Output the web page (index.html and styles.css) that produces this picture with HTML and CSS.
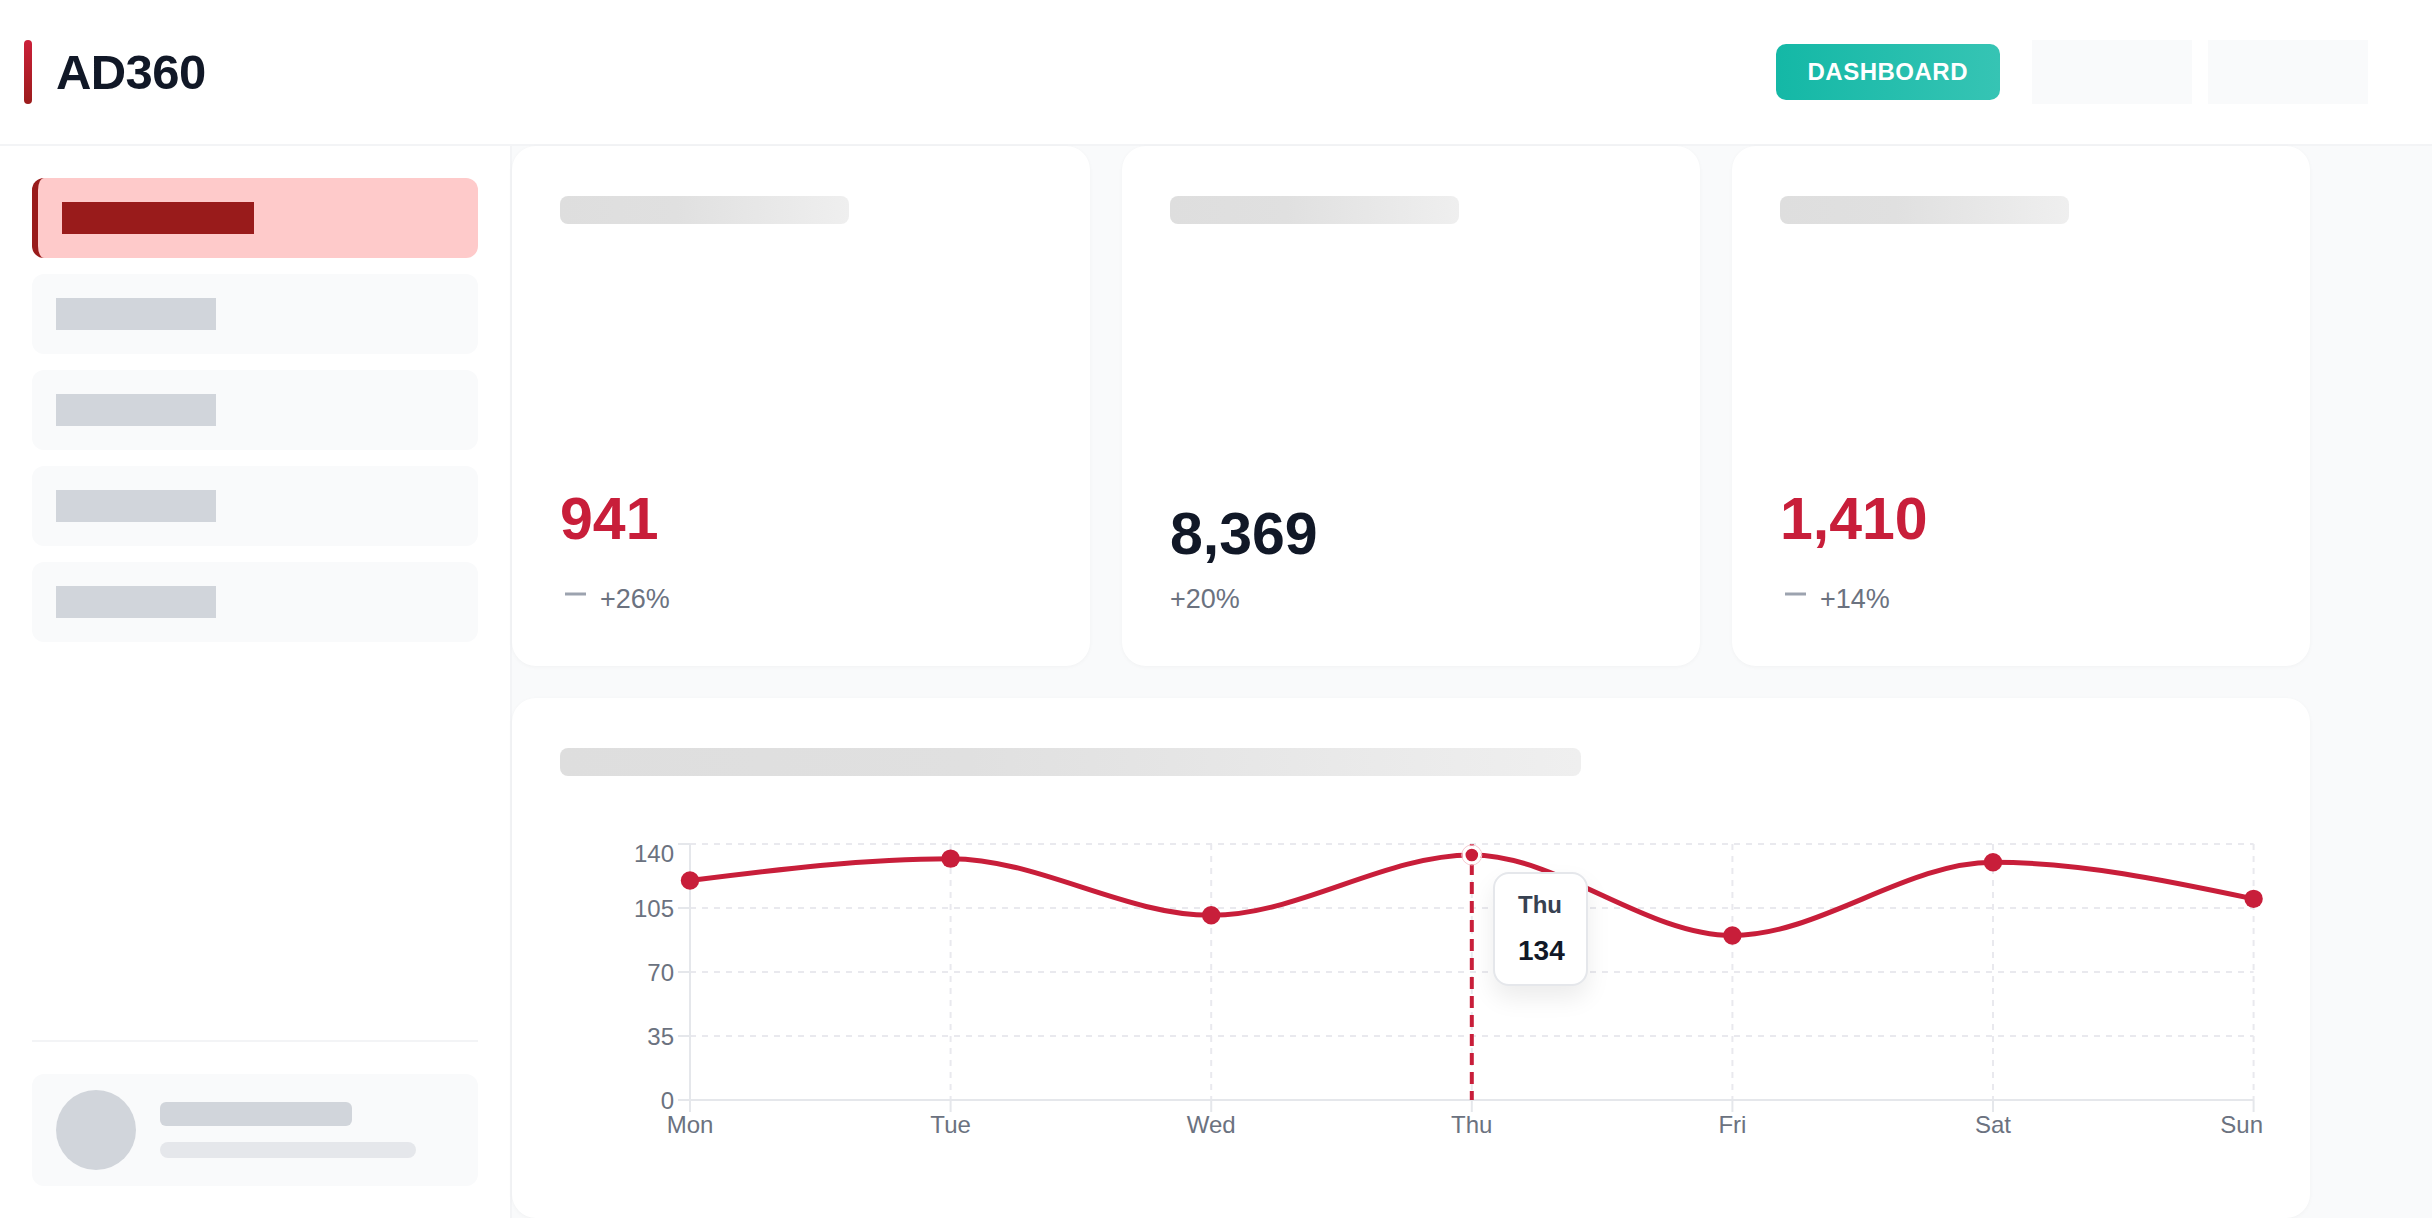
FILE: index.html
```html
<!DOCTYPE html>
<html lang="en">
<head>
<meta charset="utf-8">
<title>AD360</title>
<link rel="stylesheet" href="styles.css">
</head>
<body>
<div class="app">
  <header class="topbar">
    <div class="brand">
      <span class="brand-bar"></span>
      <span class="brand-name">AD360</span>
    </div>
    <div class="top-actions">
      <button class="btn-dash">DASHBOARD</button>
      <span class="ph-box"></span>
      <span class="ph-box"></span>
    </div>
  </header>
  <div class="layout">
    <aside class="sidebar">
      <nav class="nav">
        <div class="nav-item nav-item--active"><span class="nav-label nav-label--active"></span></div>
        <div class="nav-item"><span class="nav-label"></span></div>
        <div class="nav-item"><span class="nav-label"></span></div>
        <div class="nav-item"><span class="nav-label"></span></div>
        <div class="nav-item"><span class="nav-label"></span></div>
      </nav>
      <div class="side-footer">
        <div class="user-card">
          <span class="avatar"></span>
          <div class="user-lines">
            <span class="u-line1"></span>
            <span class="u-line2"></span>
          </div>
        </div>
      </div>
    </aside>
    <main class="main">
      <section class="grid">
        <div class="card stat">
          <div class="skel"></div>
          <div class="stat-bottom">
            <div class="stat-value">941</div>
            <div class="stat-change">
              <svg class="minus" width="28" height="38" viewBox="0 0 28 38"><line x1="5" y1="14" x2="26" y2="14" stroke="#9ca3af" stroke-width="3"/></svg>
              <span>+26%</span>
            </div>
          </div>
        </div>
        <div class="card stat">
          <div class="skel"></div>
          <div class="stat-bottom">
            <div class="stat-value stat-value--dark">8,369</div>
            <div class="stat-change"><span>+20%</span></div>
          </div>
        </div>
        <div class="card stat">
          <div class="skel"></div>
          <div class="stat-bottom">
            <div class="stat-value">1,410</div>
            <div class="stat-change">
              <svg class="minus" width="28" height="38" viewBox="0 0 28 38"><line x1="5" y1="14" x2="26" y2="14" stroke="#9ca3af" stroke-width="3"/></svg>
              <span>+14%</span>
            </div>
          </div>
        </div>
        <div class="card chart-card">
          <div class="skel"></div>
          <div class="chart-wrap">
            <svg class="chart-svg" width="1702" height="370" viewBox="0 0 1702 370">
              <g stroke="#e9e9ee" stroke-width="2" stroke-dasharray="6 6" fill="none">
                <line x1="130" y1="44" x2="1693.6" y2="44"/>
                <line x1="130" y1="108" x2="1693.6" y2="108"/>
                <line x1="130" y1="172" x2="1693.6" y2="172"/>
                <line x1="130" y1="236" x2="1693.6" y2="236"/>
                <line x1="390.6" y1="44" x2="390.6" y2="300"/>
                <line x1="651.2" y1="44" x2="651.2" y2="300"/>
                <line x1="911.8" y1="44" x2="911.8" y2="300"/>
                <line x1="1172.4" y1="44" x2="1172.4" y2="300"/>
                <line x1="1433" y1="44" x2="1433" y2="300"/>
                <line x1="1693.6" y1="44" x2="1693.6" y2="300"/>
              </g>
              <g stroke="#e5e7eb" stroke-width="2" fill="none">
                <line x1="130" y1="44" x2="130" y2="300"/>
                <line x1="130" y1="300" x2="1693.6" y2="300"/>
                <line x1="118" y1="44" x2="130" y2="44"/>
                <line x1="118" y1="108" x2="130" y2="108"/>
                <line x1="118" y1="172" x2="130" y2="172"/>
                <line x1="118" y1="236" x2="130" y2="236"/>
                <line x1="118" y1="300" x2="130" y2="300"/>
                <line x1="130" y1="300" x2="130" y2="312"/>
                <line x1="390.6" y1="300" x2="390.6" y2="312"/>
                <line x1="651.2" y1="300" x2="651.2" y2="312"/>
                <line x1="911.8" y1="300" x2="911.8" y2="312"/>
                <line x1="1172.4" y1="300" x2="1172.4" y2="312"/>
                <line x1="1433" y1="300" x2="1433" y2="312"/>
                <line x1="1693.6" y1="300" x2="1693.6" y2="312"/>
              </g>
              <g class="axis-text" text-anchor="end">
                <text x="114" y="61.7">140</text>
                <text x="114" y="117.3">105</text>
                <text x="114" y="181.3">70</text>
                <text x="114" y="245.3">35</text>
                <text x="114" y="309.3">0</text>
              </g>
              <g class="axis-text" text-anchor="middle">
                <text x="130" y="332.7">Mon</text>
                <text x="390.6" y="332.7">Tue</text>
                <text x="651.2" y="332.7">Wed</text>
                <text x="911.8" y="332.7">Thu</text>
                <text x="1172.4" y="332.7">Fri</text>
                <text x="1433" y="332.7">Sat</text>
                <text x="1703" y="332.7" text-anchor="end">Sun</text>
              </g>
              <line x1="911.8" y1="44" x2="911.8" y2="300" stroke="#c81e3a" stroke-width="4" stroke-dasharray="12 7"/>
              <path d="M130,80.57 C216.87,69.6 303.73,58.63 390.6,58.63 C477.47,58.63 564.33,115.31 651.2,115.31 C738.07,115.31 824.93,54.97 911.8,54.97 C998.67,54.97 1085.53,135.43 1172.4,135.43 C1259.27,135.43 1346.13,62.29 1433,62.29 C1519.87,62.29 1606.73,80.57 1693.6,98.86" fill="none" stroke="#c81e3a" stroke-width="5"/>
              <g fill="#c81e3a">
                <circle cx="130" cy="80.57" r="9.2"/>
                <circle cx="390.6" cy="58.63" r="9.2"/>
                <circle cx="651.2" cy="115.31" r="9.2"/>
                <circle cx="1172.4" cy="135.43" r="9.2"/>
                <circle cx="1433" cy="62.29" r="9.2"/>
                <circle cx="1693.6" cy="98.86" r="9.2"/>
              </g>
              <circle cx="911.8" cy="54.97" r="10" fill="none" stroke="#f6c9d0" stroke-width="1"/>
              <circle cx="911.8" cy="54.97" r="7.8" fill="#c81e3a" stroke="#ffffff" stroke-width="3"/>
            </svg>
            <div class="tooltip">
              <div class="tt-label">Thu</div>
              <div class="tt-value">134</div>
            </div>
          </div>
        </div>
      </section>
    </main>
  </div>
</div>
</body>
</html>
```

FILE: styles.css
```css
* { box-sizing: border-box; }
html, body { margin: 0; padding: 0; height: 100%; }
body {
  font-family: "Liberation Sans", Arial, sans-serif;
  background: #f9fafb;
  overflow: hidden;
}
.app {
  display: flex;
  flex-direction: column;
  height: 1218px;
}
.topbar {
  height: 146px;
  flex-shrink: 0;
  background: #ffffff;
  border-bottom: 2px solid #f3f4f6;
  display: flex;
  align-items: center;
  justify-content: space-between;
  padding: 0 64px 0 24px;
}
.brand {
  display: flex;
  align-items: center;
  gap: 24px;
}
.brand-bar {
  width: 8px;
  height: 64px;
  border-radius: 4px;
  background: linear-gradient(180deg, #cb2039 0%, #9b1c1c 100%);
}
.brand-name {
  font-size: 49px;
  font-weight: 700;
  line-height: 1;
  color: #111827;
  letter-spacing: -0.6px;
}
.top-actions {
  display: flex;
  align-items: center;
  gap: 16px;
}
.btn-dash {
  height: 56px;
  padding: 0 32px;
  margin-right: 16px;
  border: 0;
  border-radius: 10px;
  background: linear-gradient(90deg, #14b8a6 0%, #36c4b4 100%);
  color: #ffffff;
  font-family: "Liberation Sans", Arial, sans-serif;
  font-size: 24px;
  font-weight: 700;
  line-height: 1;
  letter-spacing: 0.5px;
}
.ph-box {
  display: block;
  width: 160px;
  height: 64px;
  background: #f9fafb;
}
.layout {
  flex: 1;
  display: flex;
  min-height: 0;
}
.sidebar {
  width: 512px;
  flex-shrink: 0;
  background: #ffffff;
  border-right: 2px solid #f3f4f6;
  padding: 32px;
  display: flex;
  flex-direction: column;
}
.nav {
  display: flex;
  flex-direction: column;
  gap: 16px;
}
.nav-item {
  height: 80px;
  border-radius: 12px;
  background: #f9fafb;
  padding: 0 24px;
  display: flex;
  align-items: center;
}
.nav-item--active {
  background: #fecaca;
  border-left: 6px solid #991b1b;
}
.nav-label {
  display: block;
  width: 160px;
  height: 32px;
  background: #d1d5db;
}
.nav-label--active {
  width: 192px;
  background: #991b1b;
}
.side-footer {
  margin-top: auto;
  border-top: 2px solid #f3f4f6;
  padding-top: 32px;
}
.user-card {
  height: 112px;
  border-radius: 12px;
  background: #f9fafb;
  padding: 0 24px;
  display: flex;
  align-items: center;
  gap: 24px;
}
.avatar {
  width: 80px;
  height: 80px;
  border-radius: 50%;
  background: #d1d5db;
  flex-shrink: 0;
}
.user-lines {
  display: flex;
  flex-direction: column;
  gap: 16px;
}
.u-line1 {
  display: block;
  width: 192px;
  height: 24px;
  border-radius: 6px;
  background: #d1d5db;
}
.u-line2 {
  display: block;
  width: 256px;
  height: 16px;
  border-radius: 8px;
  background: #e5e7eb;
}
.main {
  flex: 1;
  background: #f9fafb;
  padding: 0 122px 0 0;
}
.grid {
  height: 100%;
  display: grid;
  grid-template-columns: repeat(3, 1fr);
  grid-template-rows: 1fr 1fr;
  gap: 32px;
}
.card {
  background: #ffffff;
  border-radius: 24px;
  box-shadow: 0 1px 4px rgba(0, 0, 0, 0.035);
}
.skel {
  width: 60%;
  height: 28px;
  border-radius: 8px;
  background: linear-gradient(90deg, #dedede 0%, #e0e0e0 40%, #efefef 100%);
}
.stat {
  padding: 50px 48px 48px;
  display: flex;
  flex-direction: column;
  justify-content: space-between;
}
.stat-value {
  font-size: 59px;
  font-weight: 700;
  line-height: 58px;
  color: #c81e3a;
  margin-bottom: 32px;
}
.stat-value--dark {
  color: #111827;
  margin-bottom: 17px;
}
.stat-change {
  display: flex;
  align-items: center;
  height: 38px;
  font-size: 27px;
  line-height: 38px;
  color: #6b7280;
}
.minus {
  display: block;
  margin-right: 12px;
}
.chart-card {
  grid-column: 1 / -1;
  padding: 50px 48px 48px;
  display: flex;
  flex-direction: column;
}
.chart-wrap {
  position: relative;
  margin-top: 24px;
  height: 370px;
}
.chart-svg {
  display: block;
  overflow: visible;
}
.axis-text text {
  font-family: "Liberation Sans", Arial, sans-serif;
  font-size: 24px;
  fill: #6b7280;
}
.tooltip {
  position: absolute;
  left: 933px;
  top: 72px;
  background: #ffffff;
  border: 2px solid #e5e7eb;
  border-radius: 16px;
  padding: 17px 21px 17px 23px;
  box-shadow: 0 12px 24px rgba(0, 0, 0, 0.08);
}
.tt-label {
  font-size: 24px;
  font-weight: 700;
  line-height: 28px;
  color: #374151;
}
.tt-value {
  margin-top: 16px;
  font-size: 28px;
  font-weight: 700;
  line-height: 32px;
  color: #111827;
}
```
